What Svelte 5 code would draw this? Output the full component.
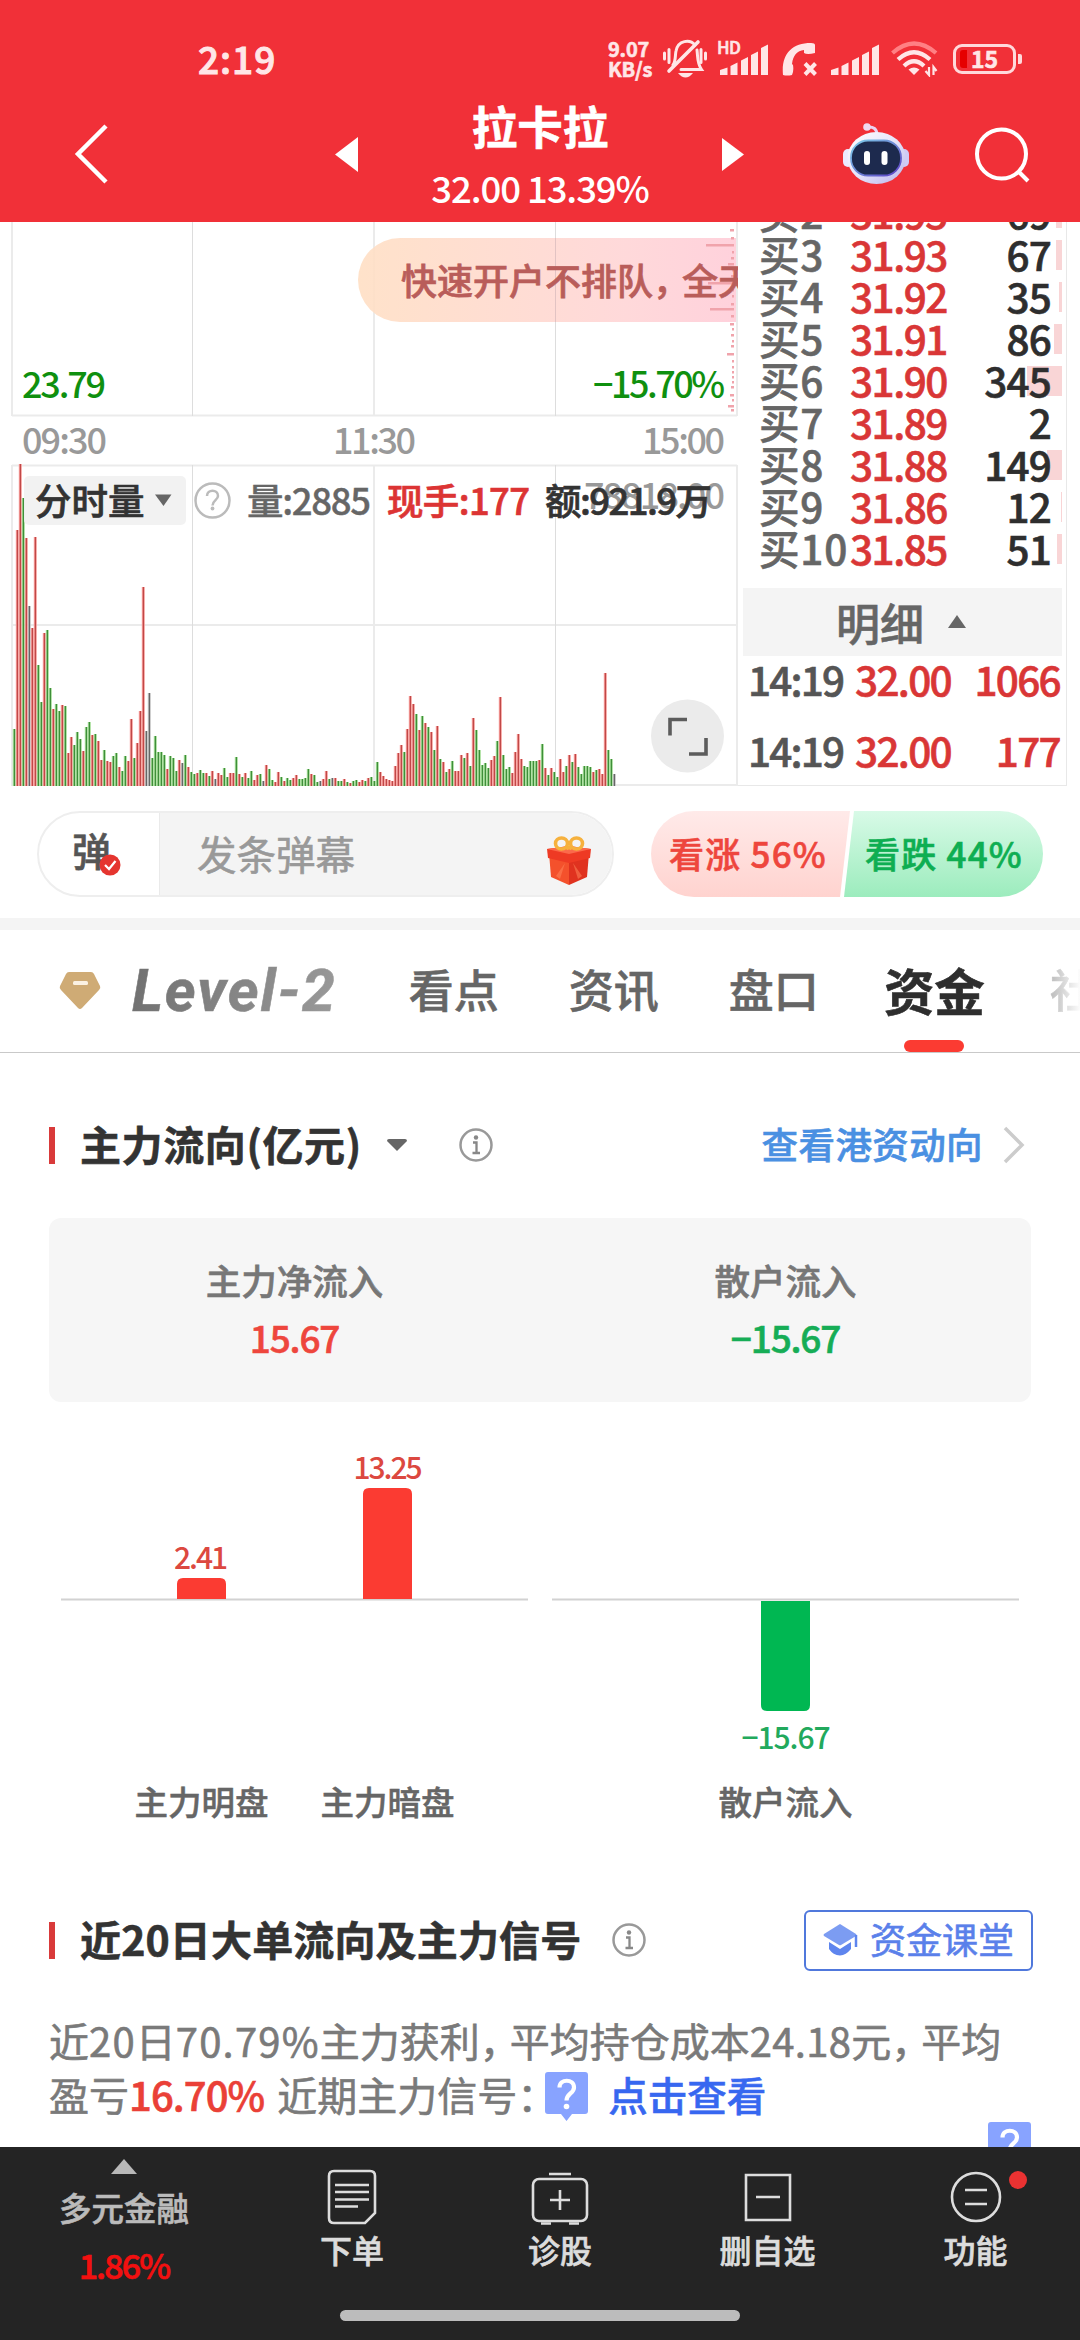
<script lang="ts">
    type Level = { name: string; price: string; qty: number; depth: number };

    const levels: Level[] = [
        { name: "买2", price: "31.95", qty: 69, depth: 6 },
        { name: "买3", price: "31.93", qty: 67, depth: 6 },
        { name: "买4", price: "31.92", qty: 35, depth: 3 },
        { name: "买5", price: "31.91", qty: 86, depth: 8 },
        { name: "买6", price: "31.90", qty: 345, depth: 35 },
        { name: "买7", price: "31.89", qty: 2, depth: 0 },
        { name: "买8", price: "31.88", qty: 149, depth: 15 },
        { name: "买9", price: "31.86", qty: 12, depth: 1 },
        { name: "买10", price: "31.85", qty: 51, depth: 5 },
    ];

    const trades = [
        { time: "14:19", price: "32.00", qty: "1066" },
        { time: "14:19", price: "32.00", qty: "177" },
    ];

    // one entry per minute: direction (r up, g down, k flat) + bar height
    const volume = `g57 r256 r322 g288 r248 k180 r158 r249 g121 g84 r153 g156 g98 r77 g82 g75 r81 g80 r33 r49
        g41 g54 g47 r35 g59 g64 r51 g52 r45 r26 g36 r25 r24 g30 g33 r19 g15 g30 r25 r67
        g28 r43 r75 r199 k55 k93 g28 g50 g34 g34 g31 r17 g30 g28 g15 r26 k23 g31 r19 g14
        g12 r13 g16 g13 r13 g10 r15 k7 r13 r11 g18 g9 r13 r13 g29 r12 g9 r13 g8 g15
        r6 r11 g12 k5 r21 g17 g6 r4 r14 g9 r5 g8 g6 r8 r11 g7 g7 g8 g17 r12
        g11 g4 k5 r7 r15 g7 k8 r8 g5 g5 r7 g4 r3 g5 g6 r4 r6 g5 r8 g9
        g5 g24 r14 r10 r7 r6 r5 r20 r33 r41 g34 r57 r90 r82 g72 r56 g70 r63 g59 r54
        g36 r60 g27 r24 g14 r17 g25 r15 r15 r31 g28 r33 g20 r68 g56 g36 g21 g23 g18 r26
        r30 g45 r89 g31 g17 g19 r13 r34 r52 r27 g20 g19 g25 g25 g25 r26 g42 r18 g11 r18
        g14 g9 r27 r14 g20 r31 g24 r32 g19 g12 g20 g20 g19 r14 g16 r17 r12 r113 g36 g27
        k12`
        .split(/\s+/)
        .map((s, i) => ({ x: 14.3 + i * 3, kind: s[0], h: Number(s.slice(1)) }));

    const ticks = [
        [230, 4], [238, 3], [245, 28], [252, 2], [258, 3], [264, 6], [270, 2], [276, 3], [283, 26],
        [290, 2], [296, 2], [304, 3], [309, 24], [316, 3], [324, 4], [329, 2], [335, 3], [341, 2],
        [346, 3], [354, 7], [361, 2], [367, 2], [372, 2], [377, 2], [382, 2], [387, 3], [395, 4],
        [400, 2], [406, 6], [410, 3],
    ];

    const tabs = [
        { text: "看点", left: 72 },
        { text: "资讯", left: 70 },
        { text: "盘口", left: 70 },
    ];
</script>

{#snippet signal()}
    <svg width="48" height="31" viewBox="0 0 48 31" aria-hidden="true">
        <path d="M0 26l7.500-2.500V31H0zM10.500 22l7-3.500V31h-7zM21 16.500l7-3.500v18h-7zM31 11l7-3.500V31h-7zM41 4l7-3.500V31h-7z" fill="#ffe6e7" />
    </svg>
{/snippet}

{#snippet info()}
    <svg class="info" width="36" height="36" viewBox="0 0 36 36" fill="none" aria-hidden="true">
        <circle cx="18" cy="18" r="15.500" stroke="#999" stroke-width="2.500" />
        <circle cx="18" cy="10.500" r="2.200" fill="#888" />
        <path d="M15 15.500h3.500v10M14.500 26h7.500" stroke="#888" stroke-width="2.300" />
    </svg>
{/snippet}

{#snippet hint()}
    <svg width="43" height="49" viewBox="0 0 43 49" aria-hidden="true">
        <path d="M3 0h37q3 0 3 3v36q0 3-3 3H27l-5.500 7-5.500-7H3q-3 0-3-3V3q0-3 3-3z" fill="#88a3ff" />
        <path d="M14.500 15.500c0-9 14.500-9 14.500 0 0 6-7.500 6-7.500 13" fill="none" stroke="#fff" stroke-width="4.200" />
        <circle cx="21.500" cy="34.500" r="2.800" fill="#fff" />
    </svg>
{/snippet}

<div class="screen">
    <header>
        <div class="status">
            <span class="clock">2:19</span>
            <div class="speed"><span>9.07</span><span>KB/s</span></div>
            <svg class="bell" width="46" height="40" viewBox="0 0 46 40" fill="none" stroke="#ffe6e7" stroke-width="3" stroke-linecap="round" aria-hidden="true">
                <path d="M2.500 14v6M7 10.500v13M43.500 14v6M39 10.500v13" />
                <path d="M11 26c3-4 2-10 3-14C16 1 28 0 33 6M35 11c1 8 0 13 4.500 19.500H19" />
                <path d="M36 3L7 32" stroke-width="3.600" />
                <path d="M16 34h15q-7.500 9-15 0z" fill="#ffe6e7" stroke="none" />
            </svg>
            <div class="hd"><span>HD</span>{@render signal()}</div>
            <svg class="phone" width="35" height="33" viewBox="0 0 35 33" aria-hidden="true">
                <path d="M1 32C-1 12 9 0 29 0q4 0 4 2v8q-8 2-11 0V7C15 8 11 12 10 21l1 1q1 6-1 10-5 1-9 0z" fill="#ffe6e7" />
                <path d="M23 20.500l10.500 11M33.500 20.500L23 31.500" stroke="#ffe6e7" stroke-width="4" />
            </svg>
            {@render signal()}
            <svg class="wifi" width="48" height="36" viewBox="0 0 48 36" fill="none" stroke="#ffe6e7" stroke-width="4.200" aria-hidden="true">
                <path d="M1.500 12Q23 -7 45 12" stroke="#ff8084" />
                <path d="M7 18.500Q23 4 39 18.500M13 25Q23 15.500 33 25" />
                <path d="M23 34l-5.500-5.500q5.500-4 11 0z" fill="#ffe6e7" stroke="none" />
                <path d="M38 26v8l-3.500-4M42.500 34v-8l3 4" stroke-width="2.200" />
            </svg>
            <div class="battery"><i></i><span>15</span></div>
        </div>
        <div class="titlebar">
            <svg class="back" width="36" height="64" viewBox="0 0 36 64" fill="none" aria-hidden="true">
                <path d="M33 4L5 32l28 28" stroke="#fff" stroke-width="4.500" />
            </svg>
            <svg class="prev" width="24" height="36" viewBox="0 0 24 36" aria-hidden="true"><path d="M23 0v35L0 17.500z" fill="#fff" /></svg>
            <div class="stock">
                <h1>拉卡拉</h1>
                <p>32.00 13.39%</p>
            </div>
            <svg class="next" width="24" height="36" viewBox="0 0 24 36" aria-hidden="true"><path d="M1 1v33l22-16.500z" fill="#fff" /></svg>
            <svg class="robot" width="66" height="62" viewBox="0 0 66 62" aria-hidden="true">
                <defs>
                    <linearGradient id="shell" x1="0" y1="0" x2="1" y2="1">
                        <stop offset="0" stop-color="#fff" />
                        <stop offset=".5" stop-color="#e6e4fa" />
                        <stop offset="1" stop-color="#b8b4ec" />
                    </linearGradient>
                    <linearGradient id="rim" x1="0" y1="0" x2="1" y2="1">
                        <stop offset="0" stop-color="#7fd0ea" />
                        <stop offset="1" stop-color="#5b3ec4" />
                    </linearGradient>
                </defs>
                <path d="M24 4q10-1 10 8" fill="none" stroke="#e9d3f2" stroke-width="3" />
                <circle cx="24" cy="4" r="3.800" fill="#f0d8f0" />
                <rect x="0" y="26" width="10" height="18" rx="5" fill="#eceaff" />
                <rect x="56" y="26" width="10" height="18" rx="5" fill="#cfcaf6" />
                <ellipse cx="33.500" cy="35" rx="29" ry="26" fill="url(#shell)" />
                <rect x="8" y="17.500" width="50" height="35" rx="17" fill="#1d2a4e" stroke="url(#rim)" stroke-width="1.800" />
                <rect x="21" y="28" width="6" height="14" rx="3" fill="#fff" />
                <rect x="38.500" y="28" width="6" height="14" rx="3" fill="#fff" />
            </svg>
            <svg class="search" width="58" height="58" viewBox="0 0 58 58" fill="none" stroke="#fff" stroke-width="4" aria-hidden="true">
                <circle cx="27.500" cy="28" r="24.500" />
                <path d="M44 45l10 10" />
            </svg>
        </div>
    </header>

    <main>
        <section class="market">
            <svg class="chart" width="738" height="565" viewBox="0 222 738 565">
                <defs>
                    <linearGradient id="promo" x1="0" x2="1">
                        <stop offset="0" stop-color="#ffdfc4" />
                        <stop offset=".7" stop-color="#ffd5d6" />
                        <stop offset="1" stop-color="#ffccd8" />
                    </linearGradient>
                </defs>
                <g class="grid">
                    <path d="M12 222v194M374 222v194M12 415.500h725M12 465.500h725M12 625h725M12 785h725M12 465v321M374 465v321" />
                    <path class="thin" d="M192.500 222v194M555.500 222v194M192.500 465v321M555.500 465v321" />
                </g>
                <path d="M738 238H400a42 42 0 0 0 0 84h338z" fill="url(#promo)" opacity=".9" />
                <path d="M555.500 238v84" stroke="#e2c3c3" />
                {#each ticks as [y, w]}
                    <rect x={734 - w} y={y - 1} width={w} height="2.500" fill="#f0a3ab" />
                {/each}
                <path d="M737 222v194M737 465v321" stroke="#ebebeb" stroke-width="2" />
                <text class="promo" x="401" y="295">快速开户不排队，<tspan dx="-7">全天</tspan></text>

                <text class="down" x="22" y="398" textLength="84">23.79</text>
                <text class="down" x="593" y="398" textLength="132">−15.70%</text>
                <text class="axis" x="22" y="454" textLength="85">09:30</text>
                <text class="axis" x="333" y="454" textLength="83">11:30</text>
                <text class="axis" x="642" y="454" textLength="83">15:00</text>

                {#each volume as v}
                    <rect class="halo {v.kind}" x={v.x - 1.5} y={786 - v.h} width="3" height={v.h} />
                    <rect class="core {v.kind}" x={v.x - 0.5} y={786 - v.h} width="1.200" height={v.h} />
                {/each}

                <rect x="24" y="476" width="162" height="49" rx="5" fill="#f1f1f1" opacity=".95" />
                <text class="lead" x="35" y="515">分时量</text>
                <path d="M155 494.500h16.500L163.500 506z" fill="#666" />
                <circle cx="212.500" cy="500.500" r="17" fill="none" stroke="#bbb" stroke-width="2.500" />
                <path d="M207 496c0-7 11-7 11 0 0 4-5.500 4.500-5.500 9.500" fill="none" stroke="#bbb" stroke-width="2.500" />
                <circle cx="212.500" cy="508.500" r="1.900" fill="#bbb" />
                <text class="axis" x="584" y="509" textLength="141">78818.00</text>
                <text class="lead grey" x="247" y="515" textLength="124">量:2885</text>
                <text class="lead red" x="387" y="515" textLength="143">现手:177</text>
                <text class="lead" x="545" y="515" textLength="167">额:921.9万</text>

                <circle cx="687.500" cy="736" r="36.500" fill="#ebebeb" />
                <path d="M687 719.500h-17v16M689 754h17v-16" fill="none" stroke="#5c5c5c" stroke-width="3.600" />
            </svg>

            <div class="book">
                <div class="levels">
                    {#each levels as l}
                        <div class="level">
                            <span class="name">{l.name}</span>
                            <span class="price">{l.price}</span>
                            <i class="depth" style:width="{l.depth}px"></i>
                            <span class="qty">{l.qty}</span>
                        </div>
                    {/each}
                </div>
                <div class="detail">
                    <span>明细</span>
                    <svg width="18" height="13" viewBox="0 0 18 13" aria-hidden="true"><path d="M9 0l9 13H0z" fill="#666" /></svg>
                </div>
                {#each trades as t}
                    <div class="trade">
                        <span class="time">{t.time}</span>
                        <span class="price">{t.price}</span>
                        <span class="amount">{t.qty}</span>
                    </div>
                {/each}
            </div>
        </section>

        <section class="social">
            <div class="danmu">
                <div class="toggle">
                    <span>弹</span>
                    <svg width="22" height="22" viewBox="0 0 22 22" aria-hidden="true">
                        <circle cx="11" cy="11" r="10.500" fill="#e5352f" />
                        <path d="M6 11l4 4 6.500-8" fill="none" stroke="#fff" stroke-width="2.200" />
                    </svg>
                </div>
                <div class="input">
                    <span>发条弹幕</span>
                    <svg width="46" height="50" viewBox="0 0 46 50" aria-hidden="true">
                        <path d="M3 17l20 5v27L5 41z" fill="#f4512c" />
                        <path d="M43 17l-20 5v27l18-8z" fill="#e0321f" />
                        <path d="M1 13l22-3 22 3-1 9-21 5-21-5z" fill="#ee3a24" />
                        <path d="M1 13l22-3 22 3-22 5z" fill="#fb6a4b" />
                        <path d="M10 40l9-13-5 16zM36 40l-9-13 5 16z" fill="#ff8a5e" opacity=".5" />
                        <g fill="none" stroke="#f6b13d" stroke-width="3.600">
                            <ellipse cx="15.500" cy="7.500" rx="6" ry="5.500" />
                            <ellipse cx="30.500" cy="7.500" rx="6" ry="5.500" />
                            <path d="M20 13q3-3 6 0" />
                        </g>
                    </svg>
                </div>
            </div>
            <div class="vote">
                <div class="bull">看涨 56%</div>
                <div class="bear">看跌 44%</div>
            </div>
        </section>

        <nav class="tabs">
            <svg class="gem" width="42" height="38" viewBox="0 0 42 38" aria-hidden="true">
                <path d="M10 0h22q2 0 3 2l6 12q1 2-1 4L23 36q-2 2-4 0L2 18q-2-2-1-4L7 2q1-2 3-2z" fill="#cfab75" />
                <rect x="14" y="9" width="15" height="4" rx="1.500" fill="#fbf1e2" />
            </svg>
            <span class="level2">Level-2</span>
            {#each tabs as t}
                <span class="tab" style:margin-left="{t.left}px">{t.text}</span>
            {/each}
            <span class="tab active">资金</span>
            <span class="tab more">社</span>
        </nav>

        <div class="heading">
            <h2>主力流向(亿元)</h2>
            <svg class="caret" width="20" height="12" viewBox="0 0 20 12" aria-hidden="true"><path d="M0 2q0-2 2-2h16q2 0 2 2l-10 10z" fill="#666" /></svg>
            {@render info()}
            <a class="hk" href="#hk">查看港资动向</a>
            <svg class="arrow" width="22" height="38" viewBox="0 0 22 38" fill="none" aria-hidden="true"><path d="M2 2l17 17L2 36" stroke="#ccc" stroke-width="3.500" /></svg>
        </div>

        <div class="summary">
            <div><span>主力净流入</span><b class="up">15.67</b></div>
            <div><span>散户流入</span><b class="fall">−15.67</b></div>
        </div>

        <svg class="flow" width="1080" height="507" viewBox="0 1402 1080 507">
            <path d="M61 1599.500h467M552 1599.500h467" stroke="#d2d2d2" stroke-width="2" />
            <path d="M177 1599v-15q0-6 6-6h37q6 0 6 6v15zM363 1599v-105q0-6 6-6h37q6 0 6 6v105z" fill="#fb3b32" />
            <path d="M761 1601v104q0 6 6 6h37q6 0 6-6v-104z" fill="#00b752" />
            <g class="value">
                <text x="201" y="1569" textLength="54">2.41</text>
                <text x="388" y="1479" textLength="69">13.25</text>
                <text class="neg" x="786" y="1749" textLength="89">−15.67</text>
            </g>
            <g class="label">
                <text x="201.500" y="1815">主力明盘</text>
                <text x="387.500" y="1815">主力暗盘</text>
                <text x="785.500" y="1815">散户流入</text>
            </g>
        </svg>

        <div class="heading second">
            <h2>近20日大单流向及主力信号</h2>
            {@render info()}
            <a class="course" href="#course">
                <svg width="35" height="32" viewBox="0 0 35 32" aria-hidden="true">
                    <path d="M17 0l16 10q1 1 0 2L18 21q-1 .500-2 0L1 12q-1-1 0-2z" fill="#7c9cf2" />
                    <path d="M6 18l11 7 11-7v7q-5 6-11 6.500Q10 31 6 25z" fill="#5e85ee" />
                    <path d="M33 11v12" stroke="#5e85ee" stroke-width="2.500" />
                </svg>
                <span>资金课堂</span>
            </a>
        </div>

        <p class="brief">
            近<i class="n">20</i>日<i class="n">70.79%</i>主力获利<i class="comma">，</i>平均持仓成本<i class="n2">24.18</i>元<i class="comma">，</i>平均<br />
            盈亏<b>16.70%</b> 近期主力信号<i class="colon">：</i>{@render hint()}<a href="#signal">点击查看</a>
        </p>
        <div class="marker">{@render hint()}</div>
    </main>

    <footer>
        <div class="sector">
            <svg width="26" height="15" viewBox="0 0 26 15" aria-hidden="true"><path d="M13 0l13 15H0z" fill="#b8b8b8" /></svg>
            <span>多元金融</span>
            <em>1.86%</em>
        </div>
        <div class="action">
            <svg width="58" height="56" viewBox="0 0 58 56" fill="none" stroke="#ddd" stroke-width="2.600" aria-hidden="true">
                <path d="M11 2h36q5 0 5 5v37L42 54H11q-5 0-5-5V7q0-5 5-5z" />
                <path d="M12 16h34M12 23h34M12 30.500h34M12 37.500h23" />
            </svg>
            <span>下单</span>
        </div>
        <div class="action">
            <svg width="58" height="56" viewBox="0 0 58 56" fill="none" stroke="#ddd" stroke-width="2.600" aria-hidden="true">
                <rect x="2" y="10" width="54" height="42" rx="6" />
                <path d="M18 5h22M29 21v20M19 31h20M10 54.500h10M38 54.500h10" />
            </svg>
            <span>诊股</span>
        </div>
        <div class="action">
            <svg width="58" height="56" viewBox="0 0 58 56" fill="none" stroke="#ddd" stroke-width="2.600" aria-hidden="true">
                <path d="M7 6h44v45H7zM17 28h24" />
            </svg>
            <span>删自选</span>
        </div>
        <div class="action">
            <svg width="58" height="56" viewBox="0 0 58 56" fill="none" stroke="#ddd" stroke-width="2.600" aria-hidden="true">
                <circle cx="29" cy="28" r="24" />
                <path d="M18 21h22M18 35h22" />
            </svg>
            <span>功能</span>
            <i class="dot"></i>
        </div>
        <div class="home"></div>
    </footer>
</div>

<style>
    :global(body) {
        margin: 0;
        background: #fff;
    }

    .screen {
        width: 1080px;
        height: 2340px;
        display: flex;
        flex-direction: column;
        overflow: hidden;
        background: #fff;
        color: #333;
        font-family: "Noto Sans CJK SC", "Noto Sans", sans-serif;
        font-weight: 500;
        white-space: nowrap;
        -webkit-text-stroke: 0.6px currentColor;

        svg {
            display: block;
            flex: none;
        }
    }

    h1, h2, p {
        margin: 0;
    }

    i, em {
        font-style: normal;
    }

    a {
        text-decoration: none;
    }

    header {
        height: 222px;
        flex: none;
        background: #f13038;
        color: #fff;
    }

    .status {
        display: flex;
        align-items: center;
        height: 96px;
        padding: 22px 0 0 198px;
        box-sizing: border-box;
        color: #ffe6e7;
    }

    .clock {
        width: 410px;
        margin-top: -2px;
        font-size: 37px;
        line-height: 40px;
        letter-spacing: 1px;
        -webkit-text-stroke-width: 1px;
    }

    .speed {
        display: flex;
        flex-direction: column;
        width: 54px;
        font-size: 20px;
        line-height: 20px;
        font-weight: 700;
        letter-spacing: -0.2px;
    }

    .bell {
        margin-right: 12px;
    }

    .hd {
        position: relative;

        span {
            position: absolute;
            left: -3px;
            top: -7px;
            font-size: 17px;
            line-height: 20px;
            letter-spacing: -0.5px;
        }
    }

    .phone {
        margin: 0 14px;
    }

    .wifi {
        margin-left: 12px;
    }

    .battery {
        position: relative;
        display: flex;
        align-items: center;
        justify-content: center;
        width: 63px;
        height: 30px;
        margin-left: 14px;
        box-sizing: border-box;
        border: 3px solid #ffd9db;
        border-radius: 9px;
        font-size: 23px;
        line-height: 24px;
        font-weight: 700;

        i {
            position: absolute;
            left: 4px;
            top: 3px;
            width: 7px;
            height: 18px;
            border-radius: 3px 0 0 3px;
            background: #e60000;
        }

        span {
            margin-top: -3px;
        }

        &::after {
            content: "";
            position: absolute;
            right: -9px;
            top: 7px;
            width: 4px;
            height: 10px;
            border-radius: 0 2px 2px 0;
            background: #ffd9db;
        }
    }

    .titlebar {
        display: flex;
        align-items: center;
        height: 116px;
        padding-left: 73px;
    }

    .prev {
        margin: 2px 0 0 226px;
    }

    .stock {
        width: 362px;
        text-align: center;

        h1 {
            margin-top: -1px;
            font-size: 45.5px;
            line-height: 56px;
            font-weight: 700;
        }

        p {
            font-size: 36.5px;
            line-height: 44px;
            margin-top: 13px;
            letter-spacing: -1.1px;
            -webkit-text-stroke-width: 0;
        }
    }

    .next {
        margin-top: 2px;
    }

    .robot {
        margin: 0 0 0 98px;
    }

    .search {
        margin: 2px 0 0 65px;
    }

    main {
        position: relative;
        height: 1925px;
        flex: none;
        overflow: hidden;
    }

    .market {
        display: flex;
        height: 564px;
        overflow: hidden;
    }

    .grid path {
        stroke: #ebebeb;
        stroke-width: 2;
        fill: none;
    }

    .grid .thin {
        stroke: #ddd;
        stroke-width: 1;
    }

    .chart text {
        font-size: 36px;
        stroke: none;
    }

    .chart .promo {
        fill: #b95d5a;
        stroke: #b95d5a;
        stroke-width: 0.7px;
    }

    .chart .down {
        fill: #0f900f;
        font-weight: 500;
    }

    .chart .axis {
        fill: #999;
        font-weight: 500;
    }

    .chart .lead {
        fill: #333;
        stroke: #333;
        stroke-width: 0.7px;
        font-size: 36.5px;
    }

    .chart .grey {
        fill: #666;
        stroke: #666;
        stroke-width: 0.4px;
    }

    .chart .red {
        fill: #dc3434;
        stroke: #dc3434;
    }

    .halo.r { fill: #f79d99; }
    .halo.g { fill: #a3dc96; }
    .halo.k { fill: #c4c4c4; }
    .core.r { fill: #c04848; }
    .core.g { fill: #3f8e3a; }
    .core.k { fill: #666; }

    .book {
        width: 329px;
        height: 564px;
        box-sizing: border-box;
        padding-left: 5px;
        border-right: 1px solid #e8e8e8;
        border-bottom: 1px solid #e8e8e8;
    }

    .levels {
        margin-top: -31px;
        height: 397px;
    }

    .level {
        position: relative;
        display: flex;
        align-items: center;
        height: 42.05px;
        padding-left: 16px;
        font-size: 40.5px;
        line-height: 42px;
        letter-spacing: -1.5px;
    }

    .name {
        width: 91px;
        color: #666;
        font-size: 40.5px;
        letter-spacing: 0.8px;
    }

    .price {
        color: #d93636;
    }

    .depth {
        position: absolute;
        right: 4px;
        top: 7px;
        height: 30px;
        background: #f9d5d6;
    }

    .qty {
        position: relative;
        margin-left: auto;
        margin-right: 15px;
        color: #2e2e2e;
        letter-spacing: -0.8px;
    }

    .detail {
        display: flex;
        align-items: center;
        width: 319px;
        height: 68px;
        box-sizing: border-box;
        padding-left: 93px;
        gap: 24px;
        background: #f4f4f4;
        color: #666;
        font-size: 44px;
        line-height: 60px;

        svg {
            margin-top: -2px;
        }
    }

    .trade {
        display: flex;
        align-items: center;
        height: 71px;
        margin: -13px 6px 13px 5px;
        font-size: 40.5px;
        letter-spacing: -1.7px;

        .price {
            margin-left: 15px;
        }
    }

    .time {
        width: 92px;
        color: #555;
        letter-spacing: -1.8px;
    }

    .amount {
        margin-left: auto;
        color: #d93636;
    }

    .social {
        display: flex;
        padding: 25px 37px 21px 37px;
        border-bottom: 12px solid #f4f4f4;
    }

    .danmu {
        display: flex;
        width: 577px;
        height: 86px;
        box-sizing: border-box;
        border: 2px solid #eee;
        border-radius: 43px;
        overflow: hidden;
    }

    .toggle {
        position: relative;
        width: 120px;
        border-right: 1px solid #eaeaea;

        span {
            display: block;
            padding: 8px 0 0 33px;
            font-size: 39px;
            line-height: 56px;
            color: #555;
        }

        svg {
            position: absolute;
            left: 60px;
            top: 41px;
        }
    }

    .input {
        flex: 1;
        display: flex;
        align-items: center;
        justify-content: space-between;
        padding: 0 20px 0 37px;
        background: #f4f4f4;
        color: #999;
        font-size: 39.5px;
        line-height: 80px;
        font-weight: 400;

        span {
            margin-top: -2px;
        }

        svg {
            margin-top: 13px;
        }
    }

    .vote {
        display: flex;
        width: 392px;
        height: 86px;
        margin-left: 37px;
        border-radius: 43px;
        overflow: hidden;
        font-size: 35px;
        line-height: 83px;
        letter-spacing: 1.2px;
    }

    .bull {
        width: 199px;
        padding-left: 18px;
        box-sizing: border-box;
        background: linear-gradient(#ffeae9, #ffd3cf);
        clip-path: polygon(0 0, 100% 0, 189px 100%, 0 100%);
        color: #ee463d;
    }

    .bear {
        flex: 1;
        margin-left: -6px;
        padding-left: 21px;
        background: linear-gradient(#d8fae7, #9cecbd);
        clip-path: polygon(10px 0, 100% 0, 100% 100%, 0 100%);
        color: #0eae52;
    }

    .tabs {
        position: relative;
        display: flex;
        align-items: center;
        height: 122px;
        padding-left: 59px;
        border-bottom: 1px solid #c9c9c9;
    }

    .level2 {
        width: 213px;
        margin: -1px 0 0 31px;
        font-family: Roboto, sans-serif;
        font-size: 59px;
        line-height: 70px;
        font-style: italic;
        font-weight: 700;
        letter-spacing: 1.9px;
        background: linear-gradient(100deg, #707070, #9a9a9a);
        -webkit-background-clip: text;
        background-clip: text;
        color: transparent;
    }

    .tab {
        margin-top: -5px;
        font-size: 45px;
        line-height: 70px;
        color: #666;
    }

    .tab.active {
        position: relative;
        margin-left: 65px;
        font-size: 50.5px;
        font-weight: 700;
        color: #2e2e2e;

        &::after {
            content: "";
            position: absolute;
            left: 20px;
            top: 86px;
            width: 60px;
            height: 12px;
            border-radius: 6px;
            background: #fb3b32;
        }
    }

    .tab.more {
        margin-left: 65px;
        color: transparent;
        background: linear-gradient(90deg, #bbb, #fff 70%);
        -webkit-background-clip: text;
        background-clip: text;
    }

    .heading {
        display: flex;
        align-items: center;
        height: 62px;
        margin: 61px 0 42px;
        padding: 0 47px 0 49px;

        &::before {
            content: "";
            width: 6px;
            height: 37px;
            margin-right: 25px;
            background: #d93a3a;
        }

        h2 {
            margin-top: -4px;
            font-size: 41px;
            line-height: 60px;
            font-weight: 700;
            letter-spacing: 0.6px;
        }
    }

    .caret {
        margin: 0 51px 0 25px;
    }

    .hk {
        margin: -3px 20px 0 auto;
        font-size: 36.5px;
        line-height: 60px;
        letter-spacing: 0.4px;
        color: #4a90e2;
    }

    .arrow {
        margin-right: 8px;
    }

    .summary {
        display: flex;
        height: 184px;
        margin: 0 49px;
        border-radius: 12px;
        background: #f6f6f6;

        div {
            flex: 1;
            display: flex;
            flex-direction: column;
            align-items: center;
            padding-top: 36px;
        }

        span {
            font-size: 35.5px;
            line-height: 52px;
            color: #777;
        }

        b {
            margin-top: 5px;
            font-size: 37px;
            line-height: 52px;
            font-weight: 500;
            letter-spacing: -1.2px;
        }

        .up { color: #ee463d; }
        .fall { color: #16ad56; }
    }

    .flow text {
        text-anchor: middle;
    }

    .flow .value text {
        font-size: 30px;
        fill: #dc4840;
        stroke: none;
    }

    .flow .value .neg {
        fill: #22a95c;
    }

    .flow .label text {
        font-size: 33.5px;
        fill: #666;
        stroke: #666;
        stroke-width: 0.5px;
    }

    .heading.second {
        margin: 0;

        h2 {
            letter-spacing: 0.15px;
        }

        .info {
            margin-left: 30px;
        }
    }

    .course {
        display: flex;
        align-items: center;
        gap: 12px;
        width: 229px;
        height: 61px;
        margin-left: auto;
        padding-left: 17px;
        box-sizing: border-box;
        border: 2px solid #5078dc;
        border-radius: 6px;
        color: #5a80ea;
        font-size: 36px;
        line-height: 50px;
        font-weight: 400;

        span {
            margin-top: -4px;
        }
    }

    .brief {
        height: 106px;
        margin: 43px 0 0 49px;
        color: #7a7a7a;
        font-size: 40px;
        line-height: 53px;
        font-weight: 400;

        b {
            margin-right: 4px;
            font-weight: 500;
            letter-spacing: -0.9px;
            color: #ea4037;
        }

        svg {
            display: inline-block;
            margin: 0 20px 0 -12px;
            vertical-align: -10px;
            height: 49px;
        }

        a {
            font-size: 39.5px;
            font-weight: 500;
            color: #3767f0;
        }
    }

    .n { letter-spacing: 1.2px; }
    .n2 { letter-spacing: 0.3px; }
    .comma { margin-right: -10px; }

    .marker {
        position: absolute;
        left: 988px;
        top: 1900px;
    }

    footer {
        position: relative;
        display: grid;
        grid-template-columns: 248px 208px 208px 207px 209px;
        height: 193px;
        background: #242424;
        color: #dcdcdc;
    }

    .sector {
        display: flex;
        flex-direction: column;
        align-items: center;
        padding-top: 12px;
        color: #bbb;

        span {
            margin-top: 10px;
            font-size: 32.500px;
            line-height: 46px;
        }

        em {
            margin-top: 13px;
            font-size: 34px;
            line-height: 44px;
            letter-spacing: -1.9px;
            color: #f21010;
        }
    }

    .action {
        position: relative;
        display: flex;
        flex-direction: column;
        align-items: center;
        padding-top: 22px;

        span {
            margin-top: 1px;
            font-size: 32px;
            line-height: 46px;
        }
    }

    .dot {
        position: absolute;
        left: 138px;
        top: 24px;
        width: 18px;
        height: 18px;
        border-radius: 50%;
        background: #ea3232;
    }

    .home {
        position: absolute;
        left: 340px;
        top: 163px;
        width: 400px;
        height: 11px;
        border-radius: 6px;
        background: #bcbcbc;
    }
</style>
